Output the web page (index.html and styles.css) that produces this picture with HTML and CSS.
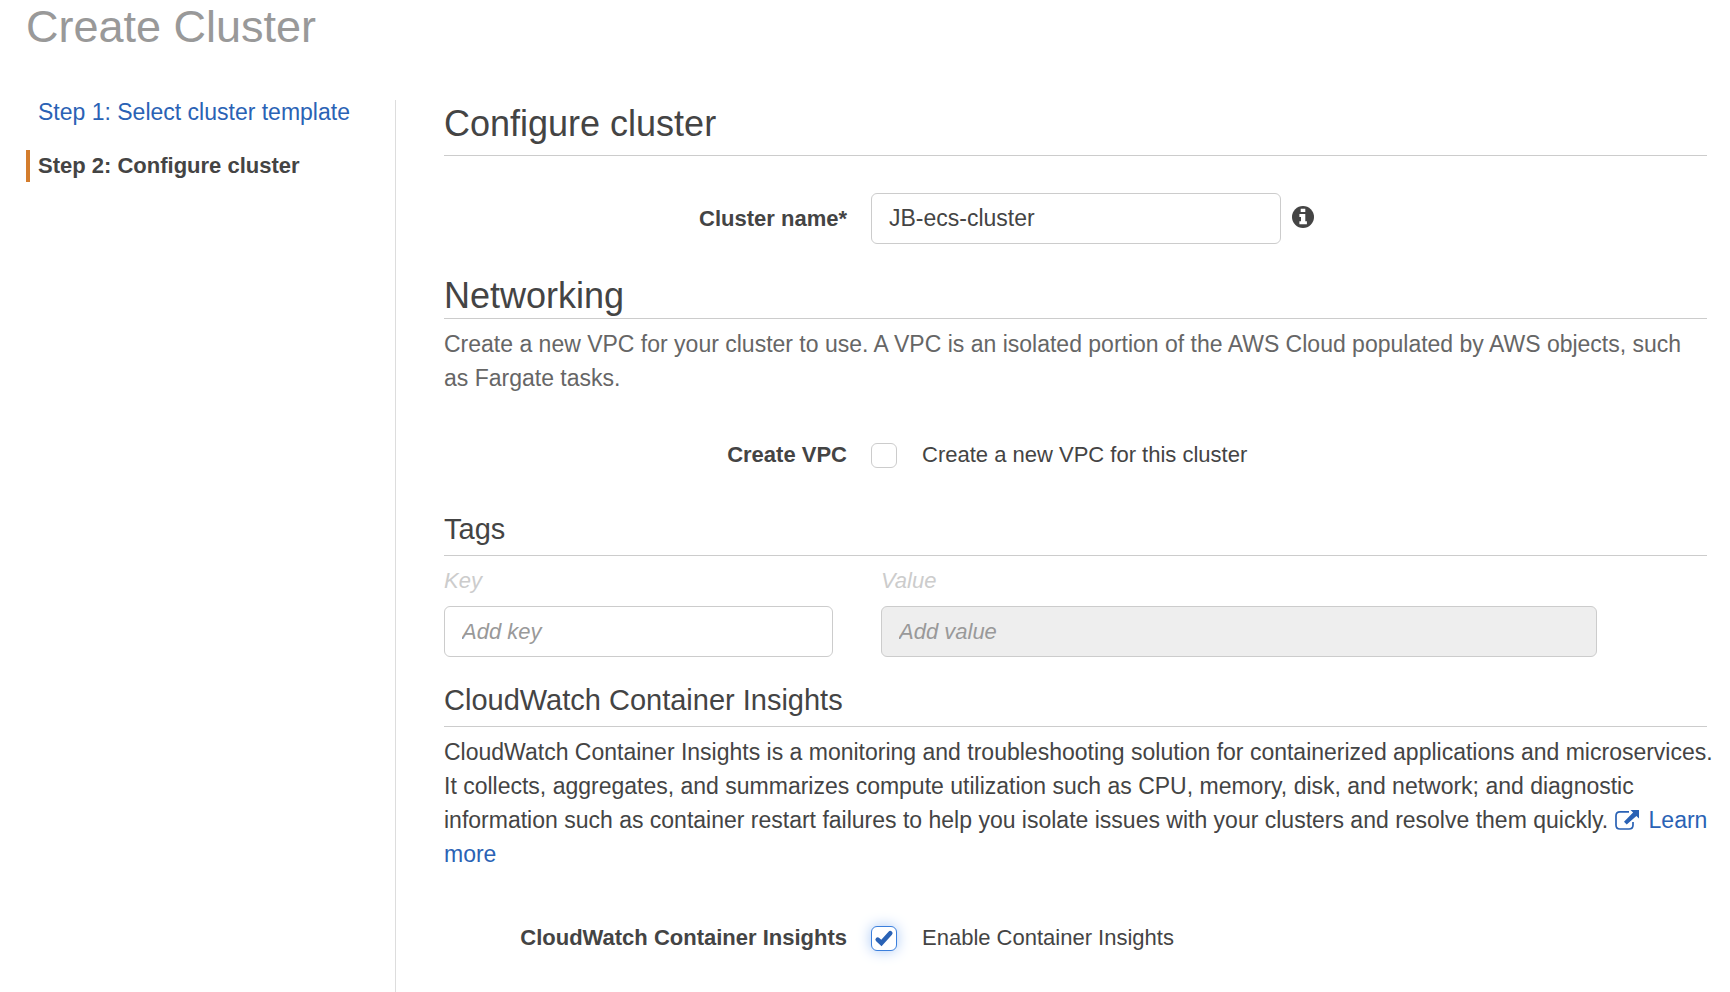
FILE: index.html
```html
<!DOCTYPE html>
<html lang="en">
<head>
<meta charset="utf-8">
<meta name="viewport" content="width=device-width, initial-scale=1">
<title>Create Cluster</title>
<link rel="stylesheet" href="styles.css">
</head>
<body>
<div class="page">
  <h1 class="page-title">Create Cluster</h1>
  <div class="wizard">
    <nav class="steps" aria-label="Steps">
      <a class="step step-link" href="#template">Step 1: Select cluster template</a>
      <span class="step step-current" aria-current="step">Step 2: Configure cluster</span>
    </nav>
    <main class="content">
      <form>
        <h2 class="heading heading-first">Configure cluster</h2>
        <div class="row row-name">
          <label class="row-label" for="cluster-name">Cluster name*</label>
          <div class="row-field">
            <input class="text-input name-input" id="cluster-name" type="text" value="JB-ecs-cluster">
            <svg class="info-icon" viewBox="0 0 22 22" role="img" aria-label="Information">
              <circle cx="11" cy="11" r="11" fill="#444"/>
              <path d="M8.7 2.8h4.600v3.200H8.700zM7.400 8.100h5.900v7.200h1.600v3H7.400v-3H9v-4.200H7.400z" fill="#fff"/>
            </svg>
          </div>
        </div>

        <h2 class="heading">Networking</h2>
        <p class="text text-muted">Create a new VPC for your cluster to use. A VPC is an isolated portion of the AWS Cloud populated by AWS objects, such<br>as Fargate tasks.</p>
        <div class="row row-vpc">
          <span class="row-label" id="vpc-label">Create VPC</span>
          <label class="row-field check-field"><input class="check" type="checkbox" aria-describedby="vpc-label">Create a new VPC for this cluster</label>
        </div>

        <h3 class="subheading">Tags</h3>
        <div class="tags">
          <div class="tag">
            <label class="tag-label" for="tag-key">Key</label>
            <input class="text-input" id="tag-key" type="text" placeholder="Add key">
          </div>
          <div class="tag">
            <label class="tag-label" for="tag-value">Value</label>
            <input class="text-input" id="tag-value" type="text" placeholder="Add value" disabled>
          </div>
        </div>

        <h3 class="subheading">CloudWatch Container Insights</h3>
        <p class="text text-wide">CloudWatch Container Insights is a monitoring and troubleshooting solution for containerized applications and microservices.<br>It collects, aggregates, and summarizes compute utilization such as CPU, memory, disk, and network; and diagnostic<br>information such as container restart failures to help you isolate issues with your clusters and resolve them quickly. <a class="link" href="#insights"><svg class="external-icon" viewBox="0 0 24 20" aria-hidden="true"><path d="M14 1.800H5Q1 1.800 1 5.800v9.200q0 4 4 4h9q4 0 4-4v-3" fill="none" stroke="currentColor" stroke-width="1.700"/><path d="M15.500 0H24v8.500l-2.600-2.600-9.700 8.600-2.700-2.700L18.100 2.600z" fill="currentColor"/></svg>Learn<br>more</a></p>
        <div class="row row-insights">
          <span class="row-label" id="insights-label">CloudWatch Container Insights</span>
          <label class="row-field check-field">
            <span class="check-wrap">
              <input class="check" type="checkbox" checked aria-describedby="insights-label">
              <svg class="tick" viewBox="0 0 26 26" aria-hidden="true"><path d="M6.500 14.200l3.800 3.500L19.500 7.500" fill="none" stroke="#2a62b5" stroke-width="4.800" stroke-linecap="round"/></svg>
            </span>Enable Container Insights</label>
        </div>
      </form>
    </main>
  </div>
</div>
</body>
</html>
```
FILE: styles.css
```css
* { box-sizing: border-box; }

body {
  margin: 0;
  background: #fff;
  color: #444;
  font-family: "Liberation Sans", Arial, sans-serif;
  font-size: 22px;
  line-height: 34px;
}

.page {
  display: flex;
  flex-direction: column;
  min-height: 100vh;
  padding: 0 23px 0 26px;
}

.page-title {
  margin: 0 0 46px;
  color: #999;
  font-size: 45px;
  font-weight: 400;
  line-height: 54px;
}

.wizard {
  display: grid;
  grid-template-columns: 369px minmax(0, 1fr);
  flex: 1;
}

.steps {
  display: flex;
  flex-direction: column;
  align-items: flex-start;
  gap: 26px;
}

.step {
  padding-left: 8px;
  border-left: 4px solid transparent;
  line-height: 32px;
  white-space: nowrap;
}

.step-link {
  color: #2a62b5;
  font-size: 23px;
  line-height: 24px;
  text-decoration: none;
}

.step-current {
  border-color: #d47d2d;
  font-weight: 700;
}

.content {
  padding: 0 0 32px 48px;
  border-left: 1px solid #ddd;
}

.heading {
  margin: 0;
  border-bottom: 1px solid #ccc;
  font-size: 36px;
  font-weight: 400;
  line-height: 44px;
}

.heading-first { padding: 2px 0 9px; }

.subheading {
  margin: 0;
  padding-bottom: 8px;
  border-bottom: 1px solid #ccc;
  font-size: 29px;
  font-weight: 400;
  line-height: 36px;
}

.text {
  margin: 8px 0 0;
  font-size: 23px;
}

.text-muted { color: #666; }
.text-wide { margin-right: -16px; }

.link {
  color: #2a62b5;
  text-decoration: none;
}

.external-icon {
  width: 24px;
  height: 20px;
  margin-right: 10px;
  vertical-align: -2px;
}

.row {
  display: grid;
  grid-template-columns: 403fr 836fr;
  column-gap: 24px;
  align-items: center;
}

.row-name { padding: 37px 0 30px; }
.row-vpc { padding: 43px 0 39px; }
.row-insights { padding-top: 50px; }

.row-label {
  font-weight: 700;
  text-align: right;
  white-space: nowrap;
}

.row-field {
  display: flex;
  align-items: center;
  gap: 11px;
}

.check-field { gap: 25px; }

.text-input {
  width: 100%;
  height: 51px;
  padding: 0 17px;
  border: 1px solid #ccc;
  border-radius: 6px;
  background: #fff;
  color: #444;
  font: inherit;
}

.text-input::placeholder {
  color: #999;
  font-style: italic;
  opacity: 1;
}

.text-input:disabled { background: #eee; }

.name-input {
  width: 49%;
  font-size: 23px;
}

.info-icon {
  width: 22px;
  height: 22px;
  margin-bottom: 4px;
}

.check {
  flex: none;
  width: 26px;
  height: 25px;
  margin: 0;
  border: 1px solid #ccc;
  border-radius: 6px;
  background: #fff;
  appearance: none;
}

.check:checked {
  border-color: #3b7fdc;
  box-shadow: 0 0 14px #a9c8f5;
}

.check-wrap {
  display: grid;
  position: relative;
}

.tick {
  position: absolute;
  inset: 0;
  width: 26px;
  height: 25px;
  pointer-events: none;
}

.tags {
  display: grid;
  grid-template-columns: 389fr 716fr;
  gap: 48px;
  padding: 8px 110px 25px 0;
}

.tag-label {
  display: block;
  margin-bottom: 8px;
  color: #ccc;
  font-style: italic;
}
```
